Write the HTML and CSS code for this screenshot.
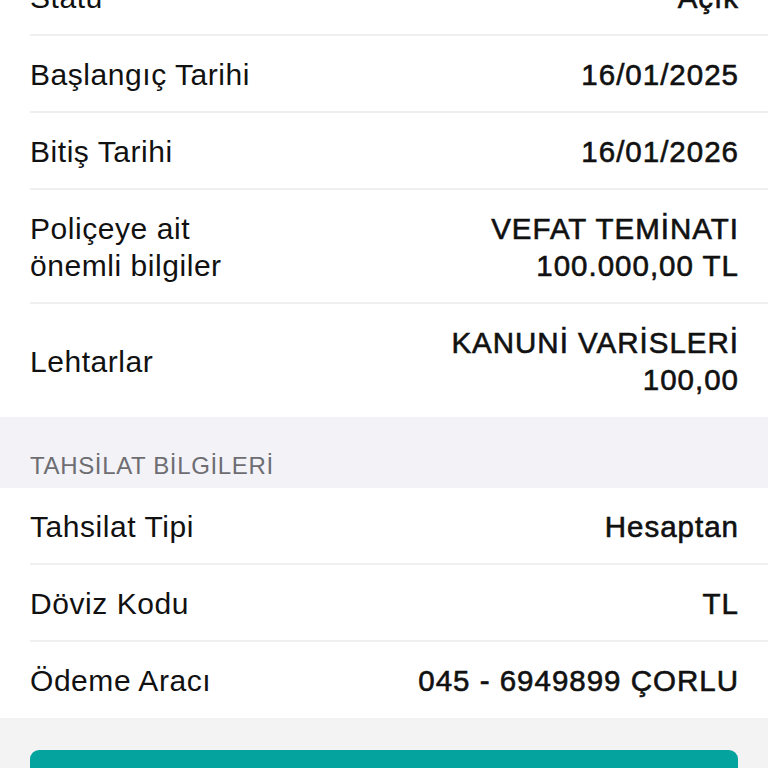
FILE: index.html
```html
<!DOCTYPE html>
<html lang="tr">
<head>
<meta charset="utf-8">
<title>Poliçe Detayı</title>
<link rel="stylesheet" href="styles.css">
</head>
<body>
<main class="screen">
  <ul class="group">
    <li class="row"><span class="label">Statü</span><span class="value">Açık</span></li>
    <li class="row"><span class="label">Başlangıç Tarihi</span><span class="value">16/01/2025</span></li>
    <li class="row"><span class="label">Bitiş Tarihi</span><span class="value">16/01/2026</span></li>
    <li class="row"><span class="label">Poliçeye ait<br>önemli bilgiler</span><span class="value">VEFAT TEMİNATI<br>100.000,00 TL</span></li>
    <li class="row"><span class="label">Lehtarlar</span><span class="value">KANUNİ VARİSLERİ<br>100,00</span></li>
  </ul>
  <div class="section-header">TAHSİLAT BİLGİLERİ</div>
  <ul class="group">
    <li class="row"><span class="label">Tahsilat Tipi</span><span class="value">Hesaptan</span></li>
    <li class="row"><span class="label">Döviz Kodu</span><span class="value">TL</span></li>
    <li class="row"><span class="label">Ödeme Aracı</span><span class="value">045 - 6949899 ÇORLU</span></li>
  </ul>
  <div class="footer">
    <button class="primary-btn" type="button"></button>
  </div>
</main>
</body>
</html>
```

FILE: styles.css
```css
html, body {
  margin: 0;
  padding: 0;
  background: #f3f3f5;
  overflow: hidden;
}

.screen {
  margin-top: -41px;
  font-family: "Liberation Sans", Arial, sans-serif;
  color: #111111;
}

.group {
  list-style: none;
  margin: 0;
  padding: 0 0 0 30px;
  background: #ffffff;
}

.row {
  display: flex;
  justify-content: space-between;
  align-items: center;
  padding: 20px 30px 18px 0;
  border-bottom: 2px solid #efeff1;
  line-height: 37px;
  font-size: 30px;
}

.row:last-child {
  border-bottom: none;
  padding-bottom: 19px;
}

.label {
  font-weight: 400;
  letter-spacing: 0.55px;
}

.value {
  font-weight: 400;
  -webkit-text-stroke: 0.6px #111111;
  text-align: right;
  letter-spacing: 1px;
  font-size: 29.5px;
  margin-right: -1px;
}

.section-header {
  background: #f2f2f7;
  height: 71px;
  box-sizing: border-box;
  padding: 0 30px 8px;
  display: flex;
  align-items: flex-end;
  font-size: 24px;
  line-height: 28px;
  color: #6d6d72;
  letter-spacing: 0.65px;
}

.footer {
  padding: 32px 30px 0;
  background: #f3f3f3;
}

.primary-btn {
  display: block;
  width: 100%;
  height: 96px;
  border: none;
  border-radius: 9px;
  background: #04a39e;
}
```
